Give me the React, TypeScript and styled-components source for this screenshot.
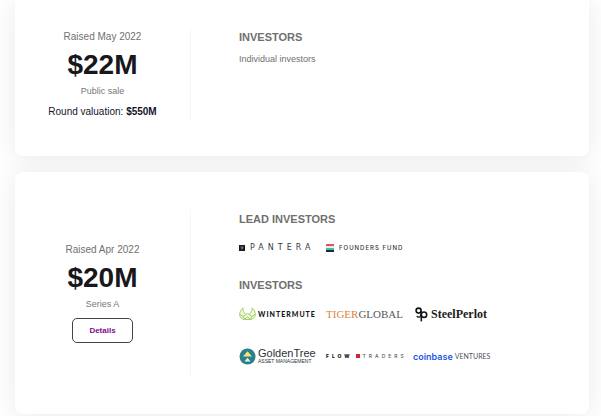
import React from "react";
import styled, { createGlobalStyle } from "styled-components";

const GlobalStyle = createGlobalStyle`
  * { box-sizing: border-box; }
  body {
    margin: 0;
    overflow: hidden;
    background: #fefefe;
    font-family: "Liberation Sans", Arial, sans-serif;
    color: #17171c;
  }
`;

const Page = styled.main`
  display: flex;
  flex-direction: column;
  gap: 16px;
  padding: 0 12px 2px 15px;
`;

const Card = styled.section<{ $continued?: boolean }>`
  display: flex;
  padding: ${(p) => (p.$continued ? "29px 0 36px" : "37px 0")};
  border-radius: ${(p) => (p.$continued ? "0 0 8px 8px" : "8px")};
  background: #fff;
  box-shadow: 0 2px 24px rgba(0, 0, 0, 0.08);
`;

const Summary = styled.div`
  display: flex;
  flex: 0 0 176px;
  flex-direction: column;
  align-items: center;
  justify-content: center;
  min-height: 91px;
  border-right: 1px solid #f7f7f7;
  text-align: center;
`;

const RaisedDate = styled.div`
  font-size: 10px;
  line-height: 12px;
  color: #707070;
`;

const Amount = styled.h2`
  margin: 4px 0 2px;
  font-size: 28px;
  font-weight: 700;
  line-height: 36px;
`;

const RoundName = styled.div`
  font-size: 9px;
  line-height: 12px;
  color: #777;
`;

const Valuation = styled.div`
  margin-top: 8px;
  font-size: 10px;
  line-height: 14px;
  color: #17122e;
`;

const DetailsButton = styled.button`
  width: 61px;
  height: 25px;
  margin-top: 8px;
  padding: 0;
  border: 1px solid #444;
  border-radius: 5px;
  background: #fff;
  font-family: inherit;
  font-size: 8px;
  font-weight: 700;
  color: #7d0b8c;
  cursor: pointer;
`;

const Backers = styled.div<{ $inset?: boolean }>`
  display: flex;
  flex: 1;
  flex-direction: column;
  gap: 8px;
  padding: ${(p) => (p.$inset ? 2 : 0)}px 0 0 48px;
`;

const GroupTitle = styled.h3`
  margin: 0;
  font-size: 11px;
  font-weight: 700;
  line-height: 16px;
  color: #707070;
`;

const Note = styled.p`
  margin: 8px 0 0;
  font-size: 9px;
  line-height: 12px;
  color: #707070;
`;

const LogoGrid = styled.div`
  display: grid;
  grid-template-columns: repeat(3, 76px);
  grid-auto-rows: 42px;
  column-gap: 11px;
  align-items: center;
`;

const Logo = styled.div<{ $gap?: number }>`
  display: flex;
  align-items: center;
  gap: ${(p) => p.$gap ?? 0}px;
  white-space: nowrap;
  line-height: 1;

  svg { flex: none; display: block; }
`;

const Stack = styled.div`
  display: flex;
  flex-direction: column;
`;

const Word = styled.span<{
  $size: number;
  $color: string;
  $font?: string;
  $weight?: number;
  $tracking?: number;
}>`
  font-family: "${(p) => p.$font ?? "Liberation Sans"}", sans-serif;
  font-size: ${(p) => p.$size}px;
  font-weight: ${(p) => p.$weight ?? 400};
  letter-spacing: ${(p) => p.$tracking ?? 0}px;
  color: ${(p) => p.$color};
`;

const PanteraMark = () => (
  <svg width="6" height="6" viewBox="0 0 6 6">
    <rect width="6" height="6" fill="#1c1c20" />
    <path d="M1.5 2h3M3 2v2.5M2 3.2h2" stroke="#aaa" strokeWidth=".6" />
  </svg>
);

const FoundersMark = () => (
  <svg width="8" height="8" viewBox="0 0 8 8">
    <rect width="8" height="2.3" fill="#e4515f" />
    <rect y="2.300" width="8" height="1.700" fill="#e6f3ee" />
    <rect y="4" width="8" height="2" fill="#43bba0" />
    <rect y="6" width="8" height="2" fill="#182d3f" />
  </svg>
);

const WintermuteMark = () => (
  <svg width="17" height="14" viewBox="0 0 17 14" fill="none" stroke="#a3d168" strokeWidth="1" strokeLinejoin="round">
    <path d="M4 .8C2 2.500.8 4.500.6 7.500c0 2.500 2 4.300 4.400 5h7c2.400-.7 4.400-2.500 4.400-5-.2-3-1.400-5-3.400-6.700.3 2.200-.2 3.700-1.500 5.200L10 7.500 8.500 6 7 7.500 5.500 6C4.200 4.500 3.700 3 4 .8Z" fill="#eef7e1" />
    <path d="M.8 7.200 4 9.500l3-2M16.200 7.200 13 9.500l-3-2M4 9.500l1.500 2.800M13 9.500l-1.500 2.800M5.500 12.200l3-2.200 3 2.200" />
  </svg>
);

const SteelPerlotMark = () => (
  <svg width="15" height="15" viewBox="0 0 15 15" fill="none" stroke="#151515" strokeWidth="1.600">
    <circle cx="5.600" cy="3.600" r="2.500" />
    <path d="M8.100 3.600v.8c0 2.300 0 5.800-2.300 5.800-1 0-1.600-.4-2-1" strokeWidth="1.300" />
    <circle cx="11" cy="7.700" r="2.700" />
    <path d="M8.300 7.700v6.700" />
  </svg>
);

const GoldenTreeMark = () => (
  <svg width="17" height="17" viewBox="0 0 17 17">
    <circle cx="8.500" cy="8.500" r="8" fill="#2c808c" />
    <path d="m8.500 3.200 4.500 5.200H4Z" fill="#f5e27a" />
    <path d="m8.500 9.800 3 3.700h-6Z" fill="#e9f3ee" />
  </svg>
);

const FlowSquare = () => (
  <svg width="4" height="4" viewBox="0 0 4 4">
    <rect width="4" height="4" fill="#d4213d" />
  </svg>
);

export default function App() {
  return (
    <>
      <GlobalStyle />
      <Page>
        <Card $continued>
          <Summary>
            <RaisedDate>Raised May 2022</RaisedDate>
            <Amount>$22M</Amount>
            <RoundName>Public sale</RoundName>
            <Valuation>
              Round valuation: <strong>$550M</strong>
            </Valuation>
          </Summary>
          <Backers>
            <div>
              <GroupTitle>INVESTORS</GroupTitle>
              <Note>Individual investors</Note>
            </div>
          </Backers>
        </Card>

        <Card>
          <Summary>
            <RaisedDate>Raised Apr 2022</RaisedDate>
            <Amount>$20M</Amount>
            <RoundName>Series A</RoundName>
            <DetailsButton type="button">Details</DetailsButton>
          </Summary>
          <Backers $inset>
            <div>
              <GroupTitle>LEAD INVESTORS</GroupTitle>
              <LogoGrid>
                <Logo $gap={5}>
                  <PanteraMark />
                  <Word $size={8} $color="#3b3b43" $font="DejaVu Sans" $tracking={4}>PANTERA</Word>
                </Logo>
                <Logo $gap={5}>
                  <FoundersMark />
                  <Word $size={6} $color="#333" $font="Inter" $weight={500} $tracking={1}>FOUNDERS FUND</Word>
                </Logo>
              </LogoGrid>
            </div>
            <div>
              <GroupTitle>INVESTORS</GroupTitle>
              <LogoGrid>
                <Logo $gap={2}>
                  <WintermuteMark />
                  <Word $size={7} $color="#161616" $font="Lato" $weight={900} $tracking={1}>WINTERMUTE</Word>
                </Logo>
                <Logo>
                  <Word $size={11} $color="#dc833f" $font="Liberation Serif">TIGER</Word>
                  <Word $size={11} $color="#53575c" $font="Liberation Serif">GLOBAL</Word>
                </Logo>
                <Logo $gap={3}>
                  <SteelPerlotMark />
                  <Word $size={12} $color="#1c1c1c" $font="Liberation Serif" $weight={700}>SteelPerlot</Word>
                </Logo>
                <Logo $gap={2}>
                  <GoldenTreeMark />
                  <Stack>
                    <Word $size={11} $color="#2d3338">GoldenTree</Word>
                    <Word $size={5} $color="#2d3338">ASSET MANAGEMENT</Word>
                  </Stack>
                </Logo>
                <Logo $gap={3}>
                  <Word $size={5} $color="#111" $font="Inter" $weight={800} $tracking={3}>FLOW</Word>
                  <FlowSquare />
                  <Word $size={5} $color="#555" $font="Inter" $weight={500} $tracking={3}>TRADERS</Word>
                </Logo>
                <Logo $gap={2}>
                  <Word $size={9} $color="#1f57e8" $font="Inter" $weight={600}>coinbase</Word>
                  <Word $size={7} $color="#50545c" $font="Lato">VENTURES</Word>
                </Logo>
              </LogoGrid>
            </div>
          </Backers>
        </Card>
      </Page>
    </>
  );
}
